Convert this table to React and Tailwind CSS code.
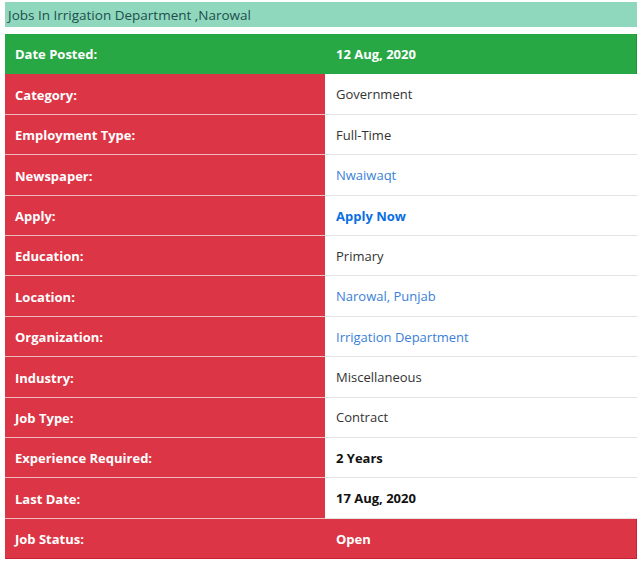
export default function App() {
  const rows = [
    { k: "Date Posted:", v: "12 Aug, 2020", type: "green" },
    { k: "Category:", v: "Government" },
    { k: "Employment Type:", v: "Full-Time" },
    { k: "Newspaper:", v: "Nwaiwaqt", link: true },
    { k: "Apply:", v: "Apply Now", apply: true },
    { k: "Education:", v: "Primary" },
    { k: "Location:", v: "Narowal, Punjab", link: true },
    { k: "Organization:", v: "Irrigation Department", link: true },
    { k: "Industry:", v: "Miscellaneous" },
    { k: "Job Type:", v: "Contract" },
    { k: "Experience Required:", v: "2 Years", bold: true },
    { k: "Last Date:", v: "17 Aug, 2020", bold: true },
    { k: "Job Status:", v: "Open", type: "red" },
  ];
  return (
    <div className="w-[640px] h-[562px] bg-white pt-[2px] pl-[5px] pr-[3px]" style={{ fontFamily: '"Open Sans", "Noto Sans", sans-serif' }}>
      <div className="h-[25px] bg-[#8fd8bd] text-[#1d4f4c] text-[13.5px] flex items-center pl-[3px] pt-[2px]">
        Jobs In Irrigation Department ,Narowal
      </div>
      <div className="mt-[7px] flex flex-col">
        {rows.map((r, i) => {
          if (r.type === "green") {
            return (
              <div key={i} className="h-[40.4px] flex bg-[#28a745] text-white font-bold text-[13px] border-r border-[#1e9438] pt-[2px]">
                <div className="w-[320px] flex items-center pl-[10px]">{r.k}</div>
                <div className="flex-1 flex items-center pl-[11px]">{r.v}</div>
              </div>
            );
          }
          if (r.type === "red") {
            return (
              <div key={i} className="h-[40.4px] flex bg-[#dc3545] text-white font-bold text-[13px] border-r border-b border-[#c82333] pt-[3px]">
                <div className="w-[320px] flex items-center pl-[10px]">{r.k}</div>
                <div className="flex-1 flex items-center pl-[11px]">{r.v}</div>
              </div>
            );
          }
          return (
            <div key={i} className="h-[40.4px] flex border-b border-[#e3e3e3] text-[13px]">
              <div className="w-[320px] flex items-center pl-[10px] pt-[3px] bg-[#dc3545] text-white font-bold border-b border-[#eeb9bf] -mb-px">{r.k}</div>
              <div
                className={
                  "flex-1 flex items-center pl-[11px] pt-[2px] " +
                  (r.link ? "text-[#3a7fd9]" : r.apply ? "text-[#0b6fe3] font-bold" : r.bold ? "text-[#111] font-bold" : "text-[#333]")
                }
              >
                {r.v}
              </div>
            </div>
          );
        })}
      </div>
    </div>
  );
}
